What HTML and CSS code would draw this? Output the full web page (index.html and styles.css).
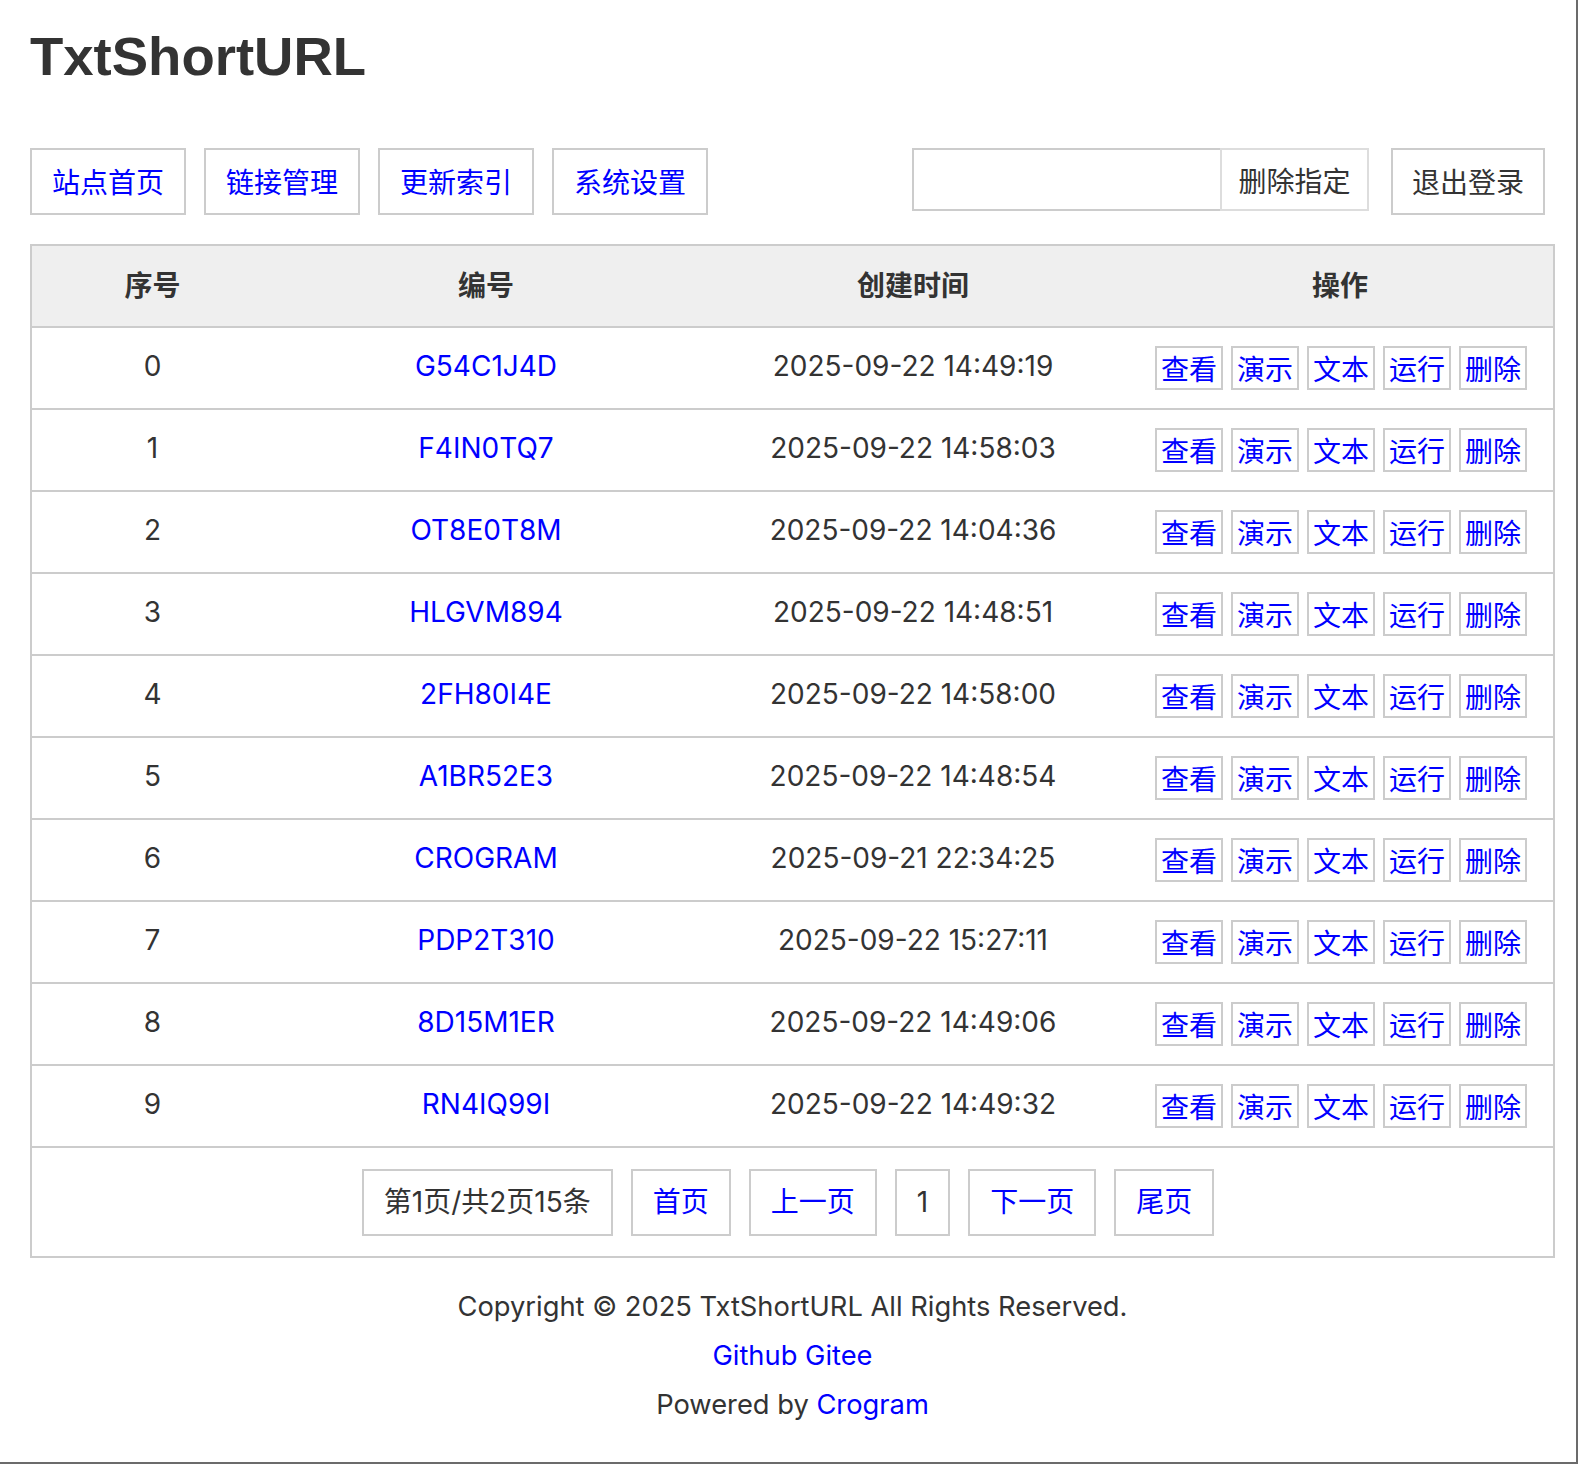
FILE: index.html
```html
<!DOCTYPE html>
<html lang="zh-CN">
<head>
<meta charset="utf-8">
<title>TxtShortURL</title>
<link rel="stylesheet" href="styles.css">
</head>
<body>
<div class="page">
  <div class="container">
    <h1 class="title">TxtShortURL</h1>
    <div class="toolbar">
      <nav class="nav">
        <a class="btn" href="#">站点首页</a>
        <a class="btn" href="#">链接管理</a>
        <a class="btn" href="#">更新索引</a>
        <a class="btn" href="#">系统设置</a>
      </nav>
      <div class="tools">
        <form class="del-form">
          <input class="del-input" type="text">
          <button class="del-btn" type="button">删除指定</button>
        </form>
        <a class="btn btn-dark" href="#">退出登录</a>
      </div>
    </div>
    <table class="list">
      <colgroup>
        <col class="c1"><col class="c2"><col class="c3"><col class="c4">
      </colgroup>
      <thead>
        <tr><th>序号</th><th>编号</th><th>创建时间</th><th>操作</th></tr>
      </thead>
      <tbody>
        <tr><td>0</td><td><a href="#">G54C1J4D</a></td><td>2025-09-22 14:49:19</td><td class="op-cell"><div class="ops"><a href="#">查看</a><a href="#">演示</a><a href="#">文本</a><a href="#">运行</a><a href="#">删除</a></div></td></tr>
        <tr><td>1</td><td><a href="#">F4IN0TQ7</a></td><td>2025-09-22 14:58:03</td><td class="op-cell"><div class="ops"><a href="#">查看</a><a href="#">演示</a><a href="#">文本</a><a href="#">运行</a><a href="#">删除</a></div></td></tr>
        <tr><td>2</td><td><a href="#">OT8E0T8M</a></td><td>2025-09-22 14:04:36</td><td class="op-cell"><div class="ops"><a href="#">查看</a><a href="#">演示</a><a href="#">文本</a><a href="#">运行</a><a href="#">删除</a></div></td></tr>
        <tr><td>3</td><td><a href="#">HLGVM894</a></td><td>2025-09-22 14:48:51</td><td class="op-cell"><div class="ops"><a href="#">查看</a><a href="#">演示</a><a href="#">文本</a><a href="#">运行</a><a href="#">删除</a></div></td></tr>
        <tr><td>4</td><td><a href="#">2FH80I4E</a></td><td>2025-09-22 14:58:00</td><td class="op-cell"><div class="ops"><a href="#">查看</a><a href="#">演示</a><a href="#">文本</a><a href="#">运行</a><a href="#">删除</a></div></td></tr>
        <tr><td>5</td><td><a href="#">A1BR52E3</a></td><td>2025-09-22 14:48:54</td><td class="op-cell"><div class="ops"><a href="#">查看</a><a href="#">演示</a><a href="#">文本</a><a href="#">运行</a><a href="#">删除</a></div></td></tr>
        <tr><td>6</td><td><a href="#">CROGRAM</a></td><td>2025-09-21 22:34:25</td><td class="op-cell"><div class="ops"><a href="#">查看</a><a href="#">演示</a><a href="#">文本</a><a href="#">运行</a><a href="#">删除</a></div></td></tr>
        <tr><td>7</td><td><a href="#">PDP2T310</a></td><td>2025-09-22 15:27:11</td><td class="op-cell"><div class="ops"><a href="#">查看</a><a href="#">演示</a><a href="#">文本</a><a href="#">运行</a><a href="#">删除</a></div></td></tr>
        <tr><td>8</td><td><a href="#">8D15M1ER</a></td><td>2025-09-22 14:49:06</td><td class="op-cell"><div class="ops"><a href="#">查看</a><a href="#">演示</a><a href="#">文本</a><a href="#">运行</a><a href="#">删除</a></div></td></tr>
        <tr><td>9</td><td><a href="#">RN4IQ99I</a></td><td>2025-09-22 14:49:32</td><td class="op-cell"><div class="ops"><a href="#">查看</a><a href="#">演示</a><a href="#">文本</a><a href="#">运行</a><a href="#">删除</a></div></td></tr>
      </tbody>
      <tfoot>
        <tr><td colspan="4" class="pager-cell">
          <div class="pager">
            <span class="pg">第1页/共2页15条</span>
            <a class="pg" href="#">首页</a>
            <a class="pg" href="#">上一页</a>
            <span class="pg">1</span>
            <a class="pg" href="#">下一页</a>
            <a class="pg" href="#">尾页</a>
          </div>
        </td></tr>
      </tfoot>
    </table>
    <footer class="footer">
      <p>Copyright © 2025 TxtShortURL All Rights Reserved.</p>
      <p><a href="#">Github</a> <a href="#">Gitee</a></p>
      <p>Powered by <a href="#">Crogram</a></p>
    </footer>
  </div>
</div>
</body>
</html>
```

FILE: styles.css
```css
html, body {
  margin: 0;
  padding: 0;
  background: #fff;
}

body {
  font-family: Inter, "Noto Sans CJK SC", sans-serif;
  font-size: 28px;
  color: #333;
}

a {
  color: #0000ff;
  text-decoration: none;
}

.page {
  box-sizing: border-box;
  min-height: 1464px;
  border-right: 2px solid #6b6b6b;
  border-bottom: 2px solid #6b6b6b;
}

.container {
  padding: 30px 21px 0 30px;
}

.title {
  margin: 0;
  font-family: "Liberation Sans", Arial, sans-serif;
  font-weight: bold;
  font-size: 54.5px;
  line-height: 54px;
  color: #333;
}

.toolbar {
  margin-top: 64px;
  display: flex;
  justify-content: space-between;
  align-items: flex-start;
  padding-right: 10px;
}

.nav {
  display: flex;
  gap: 18px;
}

.btn {
  display: block;
  border: 2px solid #ccc;
  padding: 0 20px;
  line-height: 63px;
  height: 63px;
  font-family: "Noto Sans CJK SC", sans-serif;
  color: #0000ff;
  background: #fff;
}

.btn-dark {
  color: #333;
  padding: 0 19px;
}

.tools {
  display: flex;
  gap: 22px;
  align-items: flex-start;
}

.del-form {
  display: flex;
  margin: 0;
}

.del-input {
  box-sizing: border-box;
  width: 308px;
  height: 63px;
  border: 2px solid #ccc;
  border-right: none;
  margin: 0;
  padding: 0 10px;
  font-size: 28px;
  outline: none;
}

.del-btn {
  box-sizing: border-box;
  width: 149px;
  height: 63px;
  margin: 0;
  border: 2px solid #ddd;
  background: #fff;
  color: #333;
  font-family: "Noto Sans CJK SC", sans-serif;
  font-size: 28px;
  padding: 0;
}

.list {
  margin-top: 29px;
  width: 100%;
  border-collapse: collapse;
  table-layout: fixed;
  border: 2px solid #ccc;
}

.c1 { width: 242px; }
.c2 { width: 426px; }
.c3 { width: 428px; }
.c4 { width: auto; }

.list th,
.list td {
  border: 2px solid #ccc;
  border-left: none;
  border-right: none;
  text-align: center;
  padding: 0 0 5px 0;
  height: 75px;
}

.list th {
  background: #efefef;
  font-weight: bold;
  font-family: "Noto Sans CJK SC", sans-serif;
  color: #333;
}

.list td.op-cell {
  padding: 0;
  height: 80px;
}

.ops {
  display: flex;
  justify-content: center;
  gap: 8px;
  padding-left: 2px;
}

.ops a {
  display: block;
  border: 2px solid #ccc;
  padding: 0 4px;
  line-height: 40px;
  height: 40px;
  font-family: "Noto Sans CJK SC", sans-serif;
}

.list td.pager-cell {
  padding: 0;
  height: 108px;
}

.pager {
  display: flex;
  justify-content: center;
  gap: 18px;
  padding-right: 9px;
}

.pg {
  display: block;
  border: 2px solid #ccc;
  padding: 0 20px;
  line-height: 63px;
  height: 63px;
  color: #0000ff;
}

span.pg {
  color: #333;
}

.footer {
  margin-top: 24px;
  text-align: center;
  font-size: 27.3px;
}

.footer p {
  margin: 0;
  line-height: 49px;
}
```
